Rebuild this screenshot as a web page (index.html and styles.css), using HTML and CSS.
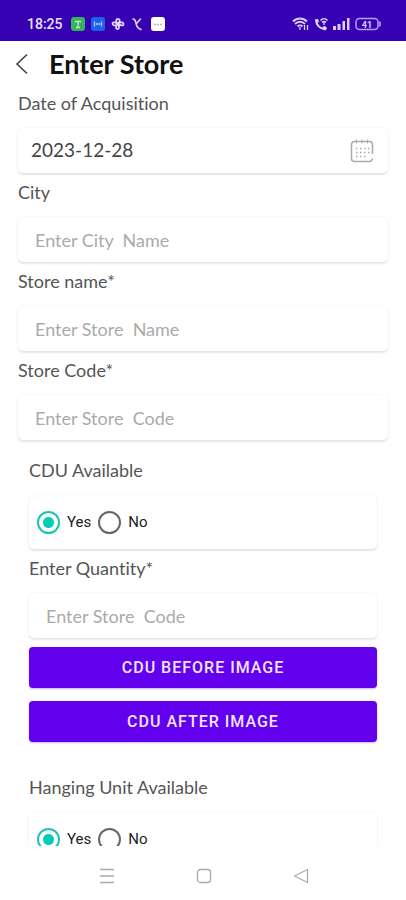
FILE: index.html
```html
<!DOCTYPE html>
<html lang="en">
<head>
<meta charset="utf-8">
<meta name="viewport" content="width=device-width, initial-scale=1">
<title>Enter Store</title>
<link rel="stylesheet" href="styles.css">
</head>
<body>
<div class="status">
  <div class="status-group">
    <span class="clock">18:25</span>
    <svg width="14" height="14" viewBox="0 0 14 14"><rect width="14" height="14" rx="3" fill="#35b45c"/><path d="M4 4.500h6M7 5v5M5 10.500h4" stroke="#b5edc4" stroke-width="1.300" fill="none"/></svg>
    <svg width="14" height="14" viewBox="0 0 14 14"><rect width="14" height="14" rx="3" fill="#1f62ea"/><path d="M3.500 4.500v5M10.500 4.500v5M5.500 6v2M8.500 6v2M5.500 7h3" stroke="#a9cdff" stroke-width="1.200" fill="none"/></svg>
    <svg width="14" height="14" viewBox="0 0 14 14" fill="none" stroke="#e4d9ff" stroke-width="1.700" stroke-linecap="round"><path d="M7 7C4 5 5 1.500 7.500 2S8 5.500 7 7c3-3 6-1.500 5.500.5S9 8 7 7c2 3 1 5.500-1 5S5.500 9 7 7c-3 2.500-5.500 1.500-5.500-.5S5 5.500 7 7"/></svg>
    <svg width="14" height="14" viewBox="0 0 14 14" fill="none" stroke="#e4d9ff" stroke-width="1.500" stroke-linecap="round"><path d="M2 2c2.500 0 2.500 2 3 4.500s2 5 5 6M5.500 6.500L9.500 2"/></svg>
    <svg width="14" height="14" viewBox="0 0 14 14"><rect width="14" height="14" rx="3" fill="#fff"/><path d="M3 7.500h8" stroke="#b9b4cc" stroke-width="1.500" stroke-dasharray="2 1"/></svg>
  </div>
  <div class="status-group status-right">
    <svg width="17" height="14" viewBox="0 0 17 14" fill="none" stroke="#d9ccff" stroke-width="1.900"><path d="M1 4.500c4-4 10-4 14 0M3 7c3-3 7-3 10 0M5.500 9.500c1.500-1.500 3.500-1.500 5 0"/><path d="M8 10v3M12.500 8v5M15.500 8v5" stroke-width="1.300"/></svg>
    <svg width="14" height="14" viewBox="0 0 14 14" fill="none" stroke="#e4d9ff"><path d="M2 2.500C2 8 6 12 11.500 12.500" stroke-width="2"/><path d="M1 2.500l3-.5 1 3-2 1zM8 10l3-1 2 2-1 2-2 0z" fill="#e4d9ff" stroke="none"/><path d="M6.500 3.500c2-2.500 5-2.500 7 0M8 5.500c1.200-1.400 2.800-1.400 4 0M10 5v3" stroke-width="1.300"/></svg>
    <svg width="17" height="14" viewBox="0 0 17 14" fill="#d9ccff"><path d="M0 9h3v4H0zM4.500 7h3v6h-3zM9.500 4H12v9H9.500zM14 1h2.500v12H14z"/></svg>
    <svg width="27" height="14" viewBox="0 0 27 14"><rect x="1" y="1.500" width="22" height="11" rx="3.500" fill="none" stroke="#b6a0f2" stroke-width="1.500"/><path d="M24.500 4.500q1.500 2.500 0 5" stroke="#b6a0f2" stroke-width="1.500" fill="none"/><text x="12" y="10.500" text-anchor="middle" class="battery-text">41</text></svg>
  </div>
</div>
<header class="header">
  <button class="back" type="button" aria-label="Back"><svg width="14" height="22" viewBox="0 0 14 22" fill="none" stroke="#444" stroke-width="1.600"><path d="M12 1.500L2 11l10 9.500"/></svg></button>
  <h1>Enter Store</h1>
</header>
<main class="content">
<form class="form">
  <div class="field">
    <label for="date">Date of Acquisition</label>
    <div class="box date-box">
      <input id="date" type="text" value="2023-12-28">
      <button class="calendar" type="button" aria-label="Pick a date"><svg width="24" height="24" viewBox="0 0 24 24" fill="none" stroke="#aaa"><path d="M22.500 15V5.500a3 3 0 0 0-3-3h-15a3 3 0 0 0-3 3v14a3 3 0 0 0 3 3h15q2.500 0 3-3" stroke-width="1.500"/><path d="M6.500.5v4M12 .5v4M17.500.5v4"/><path d="M6 9.500h14M6 13.500h14M6 17.500h10" stroke-width="1.500" stroke-dasharray="1.500 2.500"/></svg></button>
    </div>
  </div>
  <div class="field">
    <label for="city">City</label>
    <input class="box" id="city" type="text" placeholder="Enter City  Name">
  </div>
  <div class="field">
    <label for="name">Store name*</label>
    <input class="box" id="name" type="text" placeholder="Enter Store  Name">
  </div>
  <div class="field">
    <label for="code">Store Code*</label>
    <input class="box" id="code" type="text" placeholder="Enter Store  Code">
  </div>
  <section class="unit">
    <fieldset class="field">
      <legend>CDU Available</legend>
      <div class="box radios">
        <label class="option"><input type="radio" name="cdu" checked>Yes</label>
        <label class="option"><input type="radio" name="cdu">No</label>
      </div>
    </fieldset>
    <div class="field">
      <label for="quantity">Enter Quantity*</label>
      <input class="box" id="quantity" type="text" placeholder="Enter Store  Code">
    </div>
    <div class="actions">
      <button class="action" type="button">CDU BEFORE IMAGE</button>
      <button class="action" type="button">CDU AFTER IMAGE</button>
    </div>
  </section>
  <section class="unit hanging">
    <fieldset class="field">
      <legend>Hanging Unit Available</legend>
      <div class="box radios">
        <label class="option"><input type="radio" name="hanging" checked>Yes</label>
        <label class="option"><input type="radio" name="hanging">No</label>
      </div>
    </fieldset>
  </section>
</form>
</main>
<nav class="navbar" aria-label="System">
  <button type="button" aria-label="Recent apps"><svg width="16" height="16" viewBox="0 0 16 16" stroke="#aaa" stroke-width="1.300"><path d="M1 1.500h14M1 8h14M1 14.500h14"/></svg></button>
  <button type="button" aria-label="Home"><svg width="16" height="16" viewBox="0 0 16 16" fill="none" stroke="#aaa" stroke-width="1.300"><rect x="1.500" y="1.500" width="13" height="13" rx="3"/></svg></button>
  <button type="button" aria-label="Back"><svg width="16" height="16" viewBox="0 0 16 16" fill="none" stroke="#aaa" stroke-width="1.300" stroke-linejoin="round"><path d="M1.500 8L14.500 1.500v13z"/></svg></button>
</nav>
</body>
</html>
```
FILE: styles.css
```css
* { box-sizing: border-box; }
body {
  margin: 0;
  height: 100vh;
  display: flex;
  flex-direction: column;
  background: #fff;
  color: #555;
  font: 18px/20px Lato, "Liberation Sans", sans-serif;
  font-variant-ligatures: none;
}
button { border: 0; padding: 0; background: none; font: inherit; }
svg { display: block; }
.status {
  flex: none;
  display: flex;
  justify-content: space-between;
  height: 41px;
  padding: 6px 24px 0 27px;
  background: #3700b3;
  color: #e9e0ff;
}
.status-group { display: flex; align-items: center; gap: 6px; }
.status-right { gap: 5px; }
.clock { margin-right: 2px; font: 500 14px/16px Roboto, sans-serif; }
.battery-text { font: bold 9px Roboto, sans-serif; fill: #d9ccff; }
.header {
  flex: none;
  display: flex;
  align-items: center;
  gap: 20px;
  height: 46px;
  padding: 0 15px;
}
.header h1 { margin: 0; color: #111; font-size: 27px; line-height: 32px; font-weight: 700; }
.content { flex: 1; min-height: 0; overflow: hidden; padding: 6px 18px 0; }
.field { margin: 0 0 9px; padding: 0; border: 0; min-width: 0; }
.field > label, legend { display: block; margin-bottom: 15px; padding: 0; }
.box {
  display: flex;
  width: 100%;
  height: 45px;
  padding: 0 17px;
  border: 0;
  border-radius: 5px;
  background: #fff;
  box-shadow: 0 2px 2px #e6e6e6, 0 0 2px #ececec;
  font: inherit;
  color: #444;
  outline: 0;
}
.box::placeholder { color: #aaa; opacity: 1; white-space: pre; }
.date-box { align-items: center; padding: 0 14px 0 13px; }
.date-box input { flex: 1; min-width: 0; height: 24px; padding: 0 0 2px; border: 0; outline: 0; background: none; font: inherit; font-size: 19px; color: #444; }
.unit { padding: 11px 11px 0; }
.radios { height: 54px; align-items: center; gap: 7px; padding: 0 8px; }
.option { display: flex; align-items: center; gap: 7px; color: #222; font: 400 15px/14px Roboto, sans-serif; }
.option input {
  appearance: none;
  width: 23px;
  height: 23px;
  margin: 0;
  border: 2px solid #666;
  border-radius: 50%;
}
.option input:checked { border-color: #1bc4b0; background: radial-gradient(circle, #03cdb9 5px, #fff 6px); }
.actions { display: grid; gap: 13px; }
.action {
  height: 41px;
  border-radius: 4px;
  background: #6200ee;
  box-shadow: 0 1px 2px #c9b5ea;
  color: #f1e4ff;
  font: 500 16px/20px Roboto, sans-serif;
  letter-spacing: 1px;
}
.hanging { padding-top: 35px; }
.navbar { flex: none; display: flex; justify-content: center; gap: 81px; height: 54px; padding: 6px 0 0 2px; }
.navbar button { display: flex; align-items: center; }
```
